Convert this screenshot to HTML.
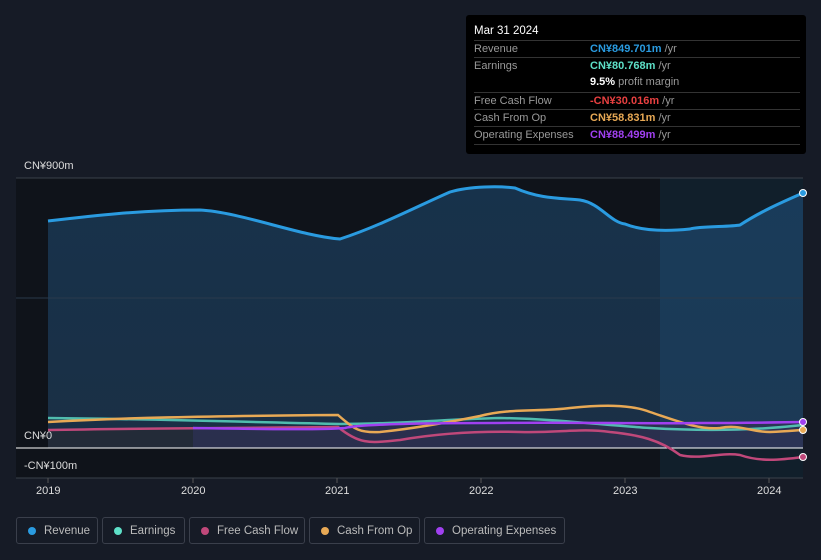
<!DOCTYPE html><html><head><style>
body{margin:0;width:821px;height:560px;background:#161b26;font-family:"Liberation Sans",sans-serif;overflow:hidden;position:relative}
.tt{position:absolute;left:466px;top:15px;width:340px;height:139px;background:#000;border-radius:3px;color:#999;font-size:11px}
.tt .h{position:absolute;left:8px;top:10px;color:#fff;font-size:11.5px}
.row{position:absolute;left:8px;width:326px;border-top:1px solid #333;height:17px;line-height:17px}
.row span{position:absolute;left:116px;font-weight:bold}
.row i{font-style:normal;font-weight:normal;color:#999}
.lg{position:absolute;top:517px;height:27px;border:1px solid #3a3f4b;border-radius:3px;color:#bbb;font-size:11.5px;line-height:27px;box-sizing:border-box;padding-left:27px}
.lg b{position:absolute;left:11px;top:9px;width:8px;height:8px;border-radius:50%}
.ax{position:absolute;color:#ddd;font-size:11px}
</style></head><body>
<svg width="821" height="560" style="position:absolute;left:0;top:0">
<defs><linearGradient id="g" x1="0" y1="0" x2="0" y2="1"><stop offset="0" stop-color="#17324b"/><stop offset="1" stop-color="#1a2f45"/></linearGradient>
<clipPath id="c"><path d="M48,221 C90,216 140,210 200,210 C240,212 300,236 340,239 C380,226 420,205 450,192 C470,186 500,186 515,188 C540,199 560,198 580,200 C600,203 610,222 625,224 C640,230 660,232 690,229 C700,226 730,227 740,225 C760,212 780,203 803,193 L803,448 L48,448 Z"/></clipPath></defs>
<rect x="16" y="178" width="644" height="300" fill="#0f131a"/>
<rect x="660" y="178" width="143" height="300" fill="#111f2b"/>
<line x1="16" y1="178" x2="803" y2="178" stroke="#3a404b"/>
<path d="M48,221 C90,216 140,210 200,210 C240,212 300,236 340,239 C380,226 420,205 450,192 C470,186 500,186 515,188 C540,199 560,198 580,200 C600,203 610,222 625,224 C640,230 660,232 690,229 C700,226 730,227 740,225 C760,212 780,203 803,193 L803,448 L48,448 Z" fill="url(#g)"/>
<rect x="660" y="178" width="143" height="270" fill="#2a7ab5" opacity="0.14" clip-path="url(#c)"/>
<line x1="16" y1="298" x2="803" y2="298" stroke="#2a3a4b"/>
<path d="M48,430 L48,448 L193,448 L193,430 Z" fill="#2a2a30" opacity="0.6"/>
<path d="M193,428 L803,422 L803,448 L193,448 Z" fill="#3a2f55" opacity="0.5"/>
<line x1="16" y1="448" x2="803" y2="448" stroke="#fff" stroke-width="1"/>
<line x1="16" y1="478" x2="803" y2="478" stroke="#3a404b"/>
<path d="M48,221 C90,216 140,210 200,210 C240,212 300,236 340,239 C380,226 420,205 450,192 C470,186 500,186 515,188 C540,199 560,198 580,200 C600,203 610,222 625,224 C640,230 660,232 690,229 C700,226 730,227 740,225 C760,212 780,203 803,193" fill="none" stroke="#2a9be0" stroke-width="3"/>
<path d="M48,418 C150,419 250,422 340,424 C400,424 450,419 500,418 C560,419 600,425 650,428 C700,431 750,431 803,425" fill="none" stroke="#5ee0c8" stroke-width="2.5" opacity="0.8"/>
<path d="M48,430 C150,428 250,428 338,427 C360,445 370,443 400,440 C440,433 480,431 520,432 C560,433 580,428 610,432 C640,435 660,440 680,455 C700,460 720,452 740,455 C760,462 780,460 803,457" fill="none" stroke="#c0487a" stroke-width="2.5"/>
<path d="M48,422 C120,418 200,416 338,415 C355,430 360,433 380,432 C420,428 460,420 480,416 C510,408 540,412 570,408 C600,405 630,404 650,412 C680,422 700,430 720,428 C740,424 750,432 770,432 C790,431 800,430 803,430" fill="none" stroke="#e8a955" stroke-width="2.5"/>
<path d="M193,428 C260,429 320,430 345,428 C360,424 420,423 500,423 C580,422 640,424 700,423 C760,423 790,422 803,422" fill="none" stroke="#a040f0" stroke-width="2.5"/>
<circle cx="803" cy="193" r="3.5" fill="#2a9be0" stroke="#fff"/>
<circle cx="803" cy="422" r="3.5" fill="#a040f0" stroke="#fff"/>
<circle cx="803" cy="430" r="3.5" fill="#e8a955" stroke="#fff"/>
<circle cx="803" cy="457" r="3.5" fill="#c0487a" stroke="#fff"/>
<g stroke="#555"><line x1="48" y1="478" x2="48" y2="483"/><line x1="193" y1="478" x2="193" y2="483"/><line x1="337" y1="478" x2="337" y2="483"/><line x1="481" y1="478" x2="481" y2="483"/><line x1="625" y1="478" x2="625" y2="483"/><line x1="769" y1="478" x2="769" y2="483"/></g>
</svg>
<div class="ax" style="left:24px;top:160px">CN¥900m</div>
<div class="ax" style="left:24px;top:430px">CN¥0</div>
<div class="ax" style="left:24px;top:460px">-CN¥100m</div>
<div class="ax" style="left:36px;top:485px">2019</div>
<div class="ax" style="left:181px;top:485px">2020</div>
<div class="ax" style="left:325px;top:485px">2021</div>
<div class="ax" style="left:469px;top:485px">2022</div>
<div class="ax" style="left:613px;top:485px">2023</div>
<div class="ax" style="left:757px;top:485px">2024</div>
<div class="tt"><div class="h">Mar 31 2024</div>
<div class="row" style="top:25px">Revenue<span style="color:#2a9be0">CN¥849.701m <i>/yr</i></span></div>
<div class="row" style="top:42px">Earnings<span style="color:#5ee0c8">CN¥80.768m <i>/yr</i></span></div>
<div class="row" style="top:59px;border:none"><span style="color:#fff">9.5% <i>profit margin</i></span></div>
<div class="row" style="top:77px">Free Cash Flow<span style="color:#e84040">-CN¥30.016m <i>/yr</i></span></div>
<div class="row" style="top:94px">Cash From Op<span style="color:#e8a955">CN¥58.831m <i>/yr</i></span></div>
<div class="row" style="top:111px;border-bottom:1px solid #333">Operating Expenses<span style="color:#a040f0">CN¥88.499m <i>/yr</i></span></div>
</div>
<div class="lg" style="left:16px;width:82px"><b style="background:#2a9be0"></b>Revenue</div>
<div class="lg" style="left:102px;width:83px"><b style="background:#5ee0c8"></b>Earnings</div>
<div class="lg" style="left:189px;width:116px"><b style="background:#c0487a"></b>Free Cash Flow</div>
<div class="lg" style="left:309px;width:111px"><b style="background:#e8a955"></b>Cash From Op</div>
<div class="lg" style="left:424px;width:141px"><b style="background:#a040f0"></b>Operating Expenses</div>
</body></html>
